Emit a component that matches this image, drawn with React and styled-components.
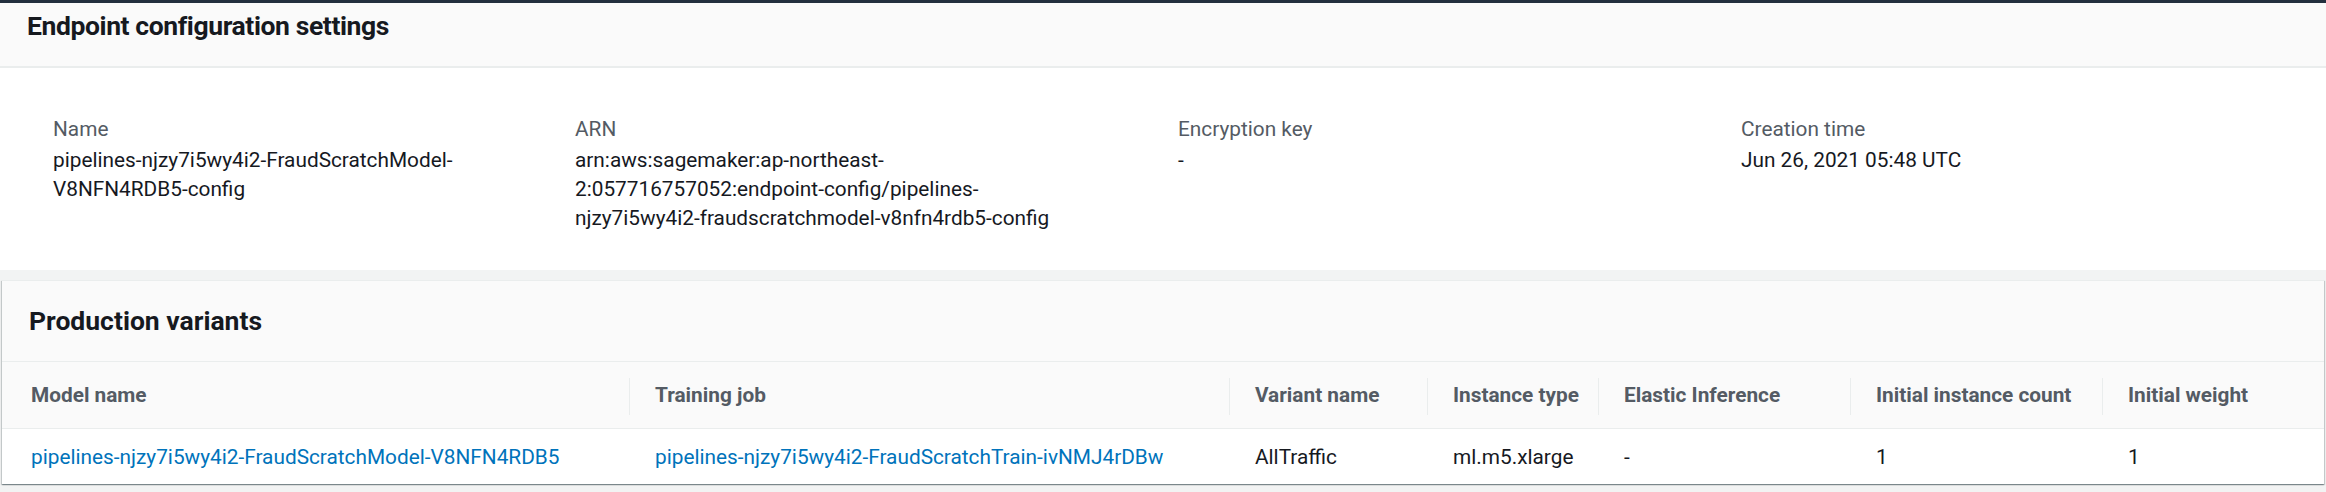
import React from "react";
import styled, { createGlobalStyle } from "styled-components";

const Global = createGlobalStyle`
  html, body { margin: 0; padding: 0; }
  body {
    background: #f2f3f3;
    font-family: Roboto, "Noto Sans", "Liberation Sans", sans-serif;
    color: #16191f;
    -webkit-font-smoothing: antialiased;
  }
`;

const Page = styled.div`
  width: 2326px;
  height: 492px;
  overflow: hidden;
  background: #f2f3f3;
  display: flex;
  flex-direction: column;
`;

const TopBar = styled.div`
  height: 3px;
  background: #232f3e;
  flex: none;
`;

const SettingsPanel = styled.section`
  background: #ffffff;
  flex: none;
`;

const PanelHeader = styled.header`
  box-sizing: border-box;
  background: #fafafa;
  height: ${(p) => p.$height}px;
  padding: ${(p) => p.$padTop}px 27px 0;
  border-bottom: ${(p) => p.$borderWidth}px solid #eaeded;
`;

const Title = styled.h2`
  margin: 0;
  font-size: 26.5px;
  line-height: 34px;
  font-weight: 700;
  color: #16191f;
  letter-spacing: ${(p) => p.$tracking || 0}px;
`;

const DetailsGrid = styled.div`
  display: grid;
  grid-template-columns: 522px 603px 563px 1fr;
  padding: 47px 0 37px 53px;
`;

const Field = styled.div`
  padding-right: 30px;
  font-size: 20.8px;
  line-height: 29px;
`;

const Label = styled.div`
  color: #545b64;
  margin-bottom: 2px;
`;

const Value = styled.div`
  color: #16191f;
  max-width: 502px;
`;

const Gap = styled.div`
  height: 10px;
  flex: none;
`;

const VariantsPanel = styled.section`
  margin: 0 2px;
  background: #ffffff;
  border-top: 1px solid #eaeded;
  box-shadow: 0 1px 1px 0 rgba(0, 28, 36, 0.3), 1px 1px 1px 0 rgba(0, 28, 36, 0.15),
    -1px 1px 1px 0 rgba(0, 28, 36, 0.15);
  flex: none;
`;

const Table = styled.table`
  width: 100%;
  border-collapse: collapse;
  table-layout: fixed;
  font-size: 20.8px;
`;

const HeadCell = styled.th`
  position: relative;
  height: 66px;
  padding: 0 0 0 ${(p) => (p.$first ? 29 : 26)}px;
  background: #fafafa;
  color: #545b64;
  font-weight: 700;
  text-align: left;
  white-space: nowrap;
  border-bottom: 1px solid #eaeded;
  &::before {
    content: "";
    display: ${(p) => (p.$first ? "none" : "block")};
    position: absolute;
    left: 0;
    top: 16px;
    bottom: 13px;
    width: 1px;
    background: #eaeded;
  }
`;

const Cell = styled.td`
  height: 55px;
  padding: 0 0 0 ${(p) => (p.$first ? 29 : 26)}px;
  color: #16191f;
  white-space: nowrap;
`;

const Link = styled.a`
  color: #0073bb;
  text-decoration: none;
`;

const columns = [
  { title: "Model name", width: 627 },
  { title: "Training job", width: 600 },
  { title: "Variant name", width: 198 },
  { title: "Instance type", width: 171 },
  { title: "Elastic Inference", width: 252 },
  { title: "Initial instance count", width: 252 },
  { title: "Initial weight", width: null },
];

const details = [
  { label: "Name", value: "pipelines-njzy7i5wy4i2-FraudScratchModel-V8NFN4RDB5-config" },
  {
    label: "ARN",
    value: (
      <>
        arn:aws:sagemaker:ap-northeast-
        <wbr />
        2:057716757052:endpoint-config/pipelines-njzy7i5wy4i2-fraudscratchmodel-v8nfn4rdb5-config
      </>
    ),
  },
  { label: "Encryption key", value: "-" },
  { label: "Creation time", value: "Jun 26, 2021 05:48 UTC" },
];

export default function App() {
  return (
    <Page>
      <Global />
      <TopBar />
      <SettingsPanel>
        <PanelHeader $height={65} $padTop={6} $borderWidth={2}>
          <Title $tracking={-0.4}>Endpoint configuration settings</Title>
        </PanelHeader>
        <DetailsGrid>
          {details.map((d) => (
            <Field key={d.label}>
              <Label>{d.label}</Label>
              <Value>{d.value}</Value>
            </Field>
          ))}
        </DetailsGrid>
      </SettingsPanel>
      <Gap />
      <VariantsPanel>
        <PanelHeader $height={81} $padTop={23} $borderWidth={1}>
          <Title>Production variants</Title>
        </PanelHeader>
        <Table>
          <colgroup>
            {columns.map((c) => (
              <col key={c.title} style={c.width ? { width: c.width } : undefined} />
            ))}
          </colgroup>
          <thead>
            <tr>
              {columns.map((c, i) => (
                <HeadCell key={c.title} $first={i === 0}>
                  {c.title}
                </HeadCell>
              ))}
            </tr>
          </thead>
          <tbody>
            <tr>
              <Cell $first>
                <Link href="#">pipelines-njzy7i5wy4i2-FraudScratchModel-V8NFN4RDB5</Link>
              </Cell>
              <Cell>
                <Link href="#">pipelines-njzy7i5wy4i2-FraudScratchTrain-ivNMJ4rDBw</Link>
              </Cell>
              <Cell>AllTraffic</Cell>
              <Cell>ml.m5.xlarge</Cell>
              <Cell>-</Cell>
              <Cell>1</Cell>
              <Cell>1</Cell>
            </tr>
          </tbody>
        </Table>
      </VariantsPanel>
    </Page>
  );
}
